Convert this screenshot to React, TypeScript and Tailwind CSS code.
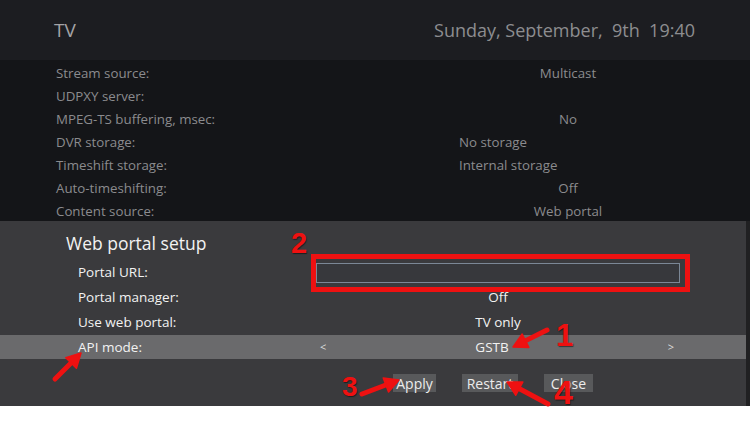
const listRows = [
  { label: 'Stream source:', value: 'Multicast', align: 'center' },
  { label: 'UDPXY server:', value: '', align: 'center' },
  { label: 'MPEG-TS buffering, msec:', value: 'No', align: 'center' },
  { label: 'DVR storage:', value: 'No storage', align: 'left' },
  { label: 'Timeshift storage:', value: 'Internal storage', align: 'left' },
  { label: 'Auto-timeshifting:', value: 'Off', align: 'center' },
  { label: 'Content source:', value: 'Web portal', align: 'center' },
];

const Arrow = ({ x1, y1, x2, y2 }: { x1: number; y1: number; x2: number; y2: number }) => {
  const dx = x2 - x1;
  const dy = y2 - y1;
  const len = Math.sqrt(dx * dx + dy * dy);
  const ux = dx / len;
  const uy = dy / len;
  const head = 14;
  const half = 7.5;
  const bx = x2 - ux * head;
  const by = y2 - uy * head;
  const pts = `${x2},${y2} ${bx - uy * half},${by + ux * half} ${bx + uy * half},${by - ux * half}`;
  return (
    <g>
      <line x1={x1} y1={y1} x2={bx + ux * 2} y2={by + uy * 2} stroke="#ee1111" strokeWidth={5} strokeLinecap="round" />
      <polygon points={pts} fill="#ee1111" strokeLinejoin="round" stroke="#ee1111" strokeWidth={1.5} />
    </g>
  );
};

const Num = ({ n, className }: { n: string; className: string }) => (
  <span
    className={`absolute font-bold leading-none text-[#ee1111] ${className}`}
    style={{ fontFamily: '"Liberation Sans", Arial, sans-serif', textShadow: '1px 1px 1px rgba(0,0,0,0.5)' }}
  >
    {n}
  </span>
);

export default function App() {
  return (
    <div
      className="relative w-[750px] h-[422px] bg-white overflow-hidden"
      style={{ fontFamily: '"Open Sans", "Noto Sans", sans-serif' }}
    >
      {/* top screen */}
      <div className="bg-[#141518]">
        <div className="h-[60px] bg-[#1c1d21] flex items-center justify-between pl-[54px] pr-[55px]">
          <span className="text-[19px] text-[#a3a3a5]">TV</span>
          <span className="text-[18px] text-[#8d8d90] whitespace-pre">Sunday, September,  9th  19:40</span>
        </div>
        <div className="pt-[2px] h-[161px]">
          {listRows.map((r) => (
            <div key={r.label} className="h-[23px] flex items-center text-[13.3px] text-[#8b8b8e]">
              <span className="pl-[56px] w-[459px]">{r.label}</span>
              <span className={`w-[218px] ${r.align === 'left' ? 'text-left' : 'text-center'}`}>{r.value}</span>
            </div>
          ))}
        </div>
      </div>

      {/* dialog */}
      <div className="bg-[#3a3a3d] h-[185px] pt-[9px] border-r-4 border-[#202022]">
        <div className="h-[26px] pl-[66px] flex items-center text-[17.5px] text-[#f2f2f2]">Web portal setup</div>
        <div className="mt-[4px]">
          <div className="h-[25px] flex items-center text-[13.5px] text-[#f2f2f2]">
            <span className="pl-[78px] w-[316px]">Portal URL:</span>
            <div className="w-[364px] h-[20px] bg-[#37383c] border border-[#7b8796]" />
          </div>
          <div className="h-[25px] flex items-center text-[13.5px] text-[#f2f2f2]">
            <span className="pl-[78px] w-[316px]">Portal manager:</span>
            <span className="w-[364px] text-center">Off</span>
          </div>
          <div className="h-[25px] flex items-center text-[13.5px] text-[#f2f2f2]">
            <span className="pl-[78px] w-[316px]">Use web portal:</span>
            <span className="w-[364px] text-center">TV only</span>
          </div>
          <div className="h-[24px] flex items-center text-[13.5px] text-[#f2f2f2] bg-[#6a6a6c]">
            <span className="pl-[78px] w-[316px]">API mode:</span>
            <div className="w-[364px] flex items-center justify-between pl-[4px] pr-[6px]">
              <span className="text-[11px] text-[#dddddd]">&lt;</span>
              <span className="-ml-[10px]">GSTB</span>
              <span className="text-[11px] text-[#dddddd]">&gt;</span>
            </div>
          </div>
        </div>
        <div className="mt-[15px] flex pl-[393px] gap-[26px] text-[14px] text-[#ececec]">
          <div className="w-[43px] h-[18px] bg-[#58595b] flex items-center justify-center">Apply</div>
          <div className="w-[56px] h-[18px] bg-[#58595b] flex items-center justify-center">Restart</div>
          <div className="w-[49px] h-[18px] bg-[#58595b] flex items-center justify-center">Close</div>
        </div>
      </div>

      {/* annotations */}
      <div className="absolute left-[311px] top-[254px] w-[379px] h-[38px] border-[5px] border-[#ee1111]" />
      <svg className="absolute inset-0" width={750} height={422}>
        <Arrow x1={547} y1={330} x2={513} y2={347} />
        <Arrow x1={362} y1={394} x2={399} y2={380} />
        <Arrow x1={548} y1={404} x2={507} y2={382} />
        <Arrow x1={55} y1={379} x2={81} y2={353} />
      </svg>
      <Num n="2" className="left-[291px] top-[229px] text-[29px]" />
      <Num n="1" className="left-[556px] top-[320px] text-[31px]" />
      <Num n="3" className="left-[342px] top-[373px] text-[28px]" />
      <Num n="4" className="left-[554px] top-[375px] text-[34px]" />
    </div>
  );
}
